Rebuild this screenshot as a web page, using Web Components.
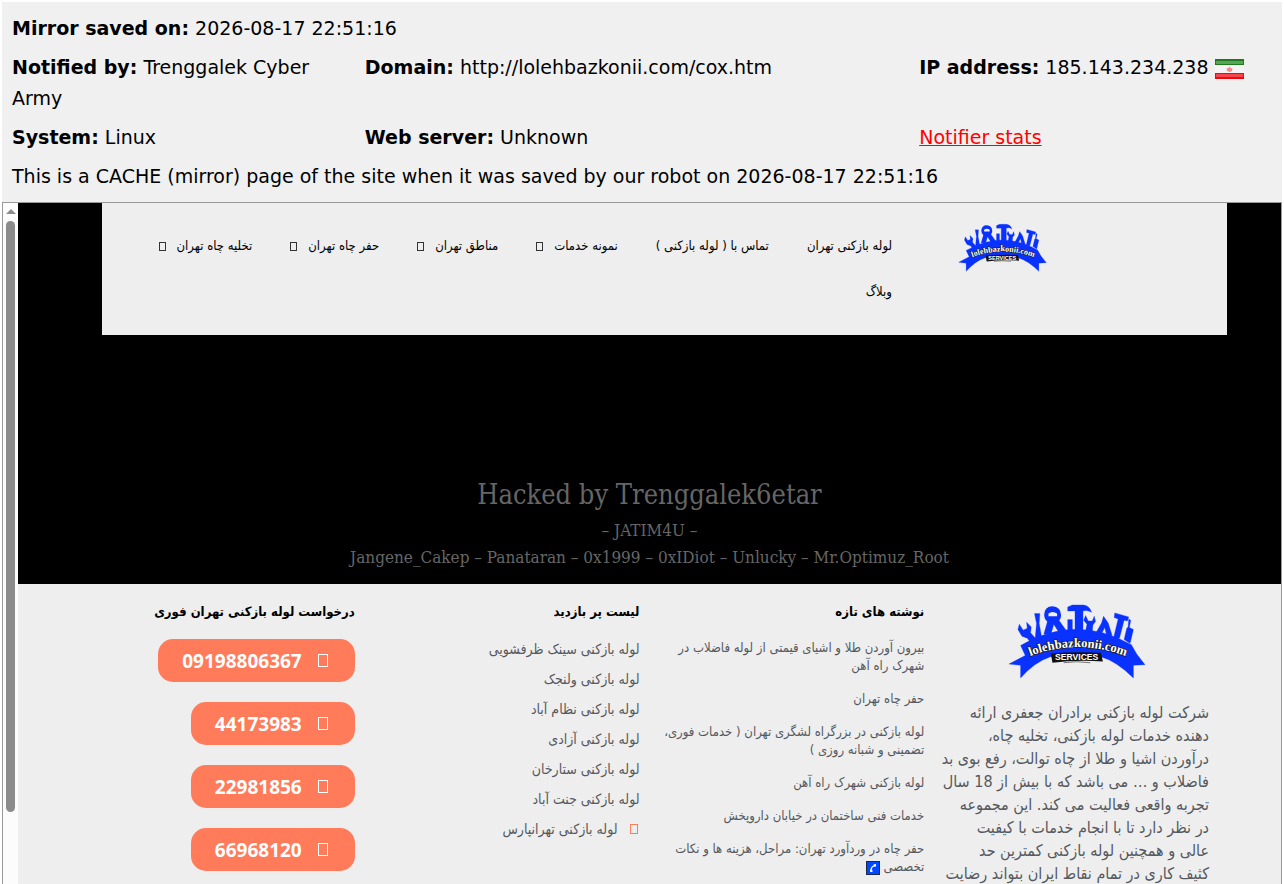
<!DOCTYPE html>
<html lang="en">
<head>
<meta charset="utf-8">
<title>Mirror saved on 2026-08-17</title>
<style>
    body{
        margin:0;
        padding:2px 2px 0;
        height:100vh;
        box-sizing:border-box;
        display:flex;
        flex-direction:column;
        background:#fff;
        overflow:hidden;
        font-family:"DejaVu Sans", Verdana, sans-serif;
    }
</style>
</head>
<body>

<mirror-info>
    <info-cell wide label="Mirror saved on:">2026-08-17 22:51:16</info-cell>
    <info-cell label="Notified by:">Trenggalek Cyber Army</info-cell>
    <info-cell label="Domain:">http://lolehbazkonii.com/cox.htm</info-cell>
    <info-cell label="IP address:">185.143.234.238 <flag-iran></flag-iran></info-cell>
    <info-cell label="System:">Linux</info-cell>
    <info-cell label="Web server:">Unknown</info-cell>
    <info-cell><a href="#stats">Notifier stats</a></info-cell>
    <info-cell wide>This is a CACHE (mirror) page of the site when it was saved by our robot on 2026-08-17 22:51:16</info-cell>
</mirror-info>

<mirror-frame>
    <site-header>
        <nav-item>لوله بازکنی تهران</nav-item>
        <nav-item>تماس با ( لوله بازکنی )</nav-item>
        <nav-item menu>نمونه خدمات</nav-item>
        <nav-item menu>مناطق تهران</nav-item>
        <nav-item menu>حفر چاه تهران</nav-item>
        <nav-item menu>تخلیه چاه تهران</nav-item>
        <nav-item>وبلاگ</nav-item>
    </site-header>

    <hacked-banner title="Hacked by Trenggalek6etar">
        <p>– JATIM4U –</p>
        <p>Jangene_Cakep – Panataran – 0x1999 – 0xIDiot – Unlucky – Mr.Optimuz_Root</p>
    </hacked-banner>

    <site-footer>
        <footer-about>شرکت لوله بازکنی برادران جعفری ارائه<br>دهنده خدمات لوله بازکنی، تخلیه چاه،<br>درآوردن اشیا و طلا از چاه توالت، رفع بوی بد<br>فاضلاب و … می باشد که با بیش از 18 سال<br>تجربه واقعی فعالیت می کند. این مجموعه<br>در نظر دارد تا با انجام خدمات با کیفیت<br>عالی و همچنین لوله بازکنی کمترین حد<br>کثیف کاری در تمام نقاط ایران بتواند رضایت</footer-about>

        <footer-column heading="نوشته های تازه">
            <footer-link small>بیرون آوردن طلا و اشیای قیمتی از لوله فاضلاب در<br>شهرک راه آهن</footer-link>
            <footer-link small>حفر چاه تهران</footer-link>
            <footer-link small>لوله بازکنی در بزرگراه لشگری تهران ( خدمات فوری،<br>تضمینی و شبانه روزی )</footer-link>
            <footer-link small>لوله بازکنی شهرک راه آهن</footer-link>
            <footer-link small>خدمات فنی ساختمان در خیابان داروپخش</footer-link>
            <footer-link small>حفر چاه در وردآورد تهران: مراحل، هزینه ها و نکات<br>تخصصی <phone-mark></phone-mark></footer-link>
        </footer-column>

        <footer-column heading="لیست پر بازدید">
            <footer-link>لوله بازکنی سینک ظرفشویی</footer-link>
            <footer-link>لوله بازکنی ولنجک</footer-link>
            <footer-link>لوله بازکنی نظام آباد</footer-link>
            <footer-link>لوله بازکنی آزادی</footer-link>
            <footer-link>لوله بازکنی ستارخان</footer-link>
            <footer-link>لوله بازکنی جنت آباد</footer-link>
            <footer-link icon>لوله بازکنی تهرانپارس</footer-link>
        </footer-column>

        <footer-column heading="درخواست لوله بازکنی تهران فوری">
            <phone-button number="09198806367"></phone-button>
            <phone-button number="44173983"></phone-button>
            <phone-button number="22981856"></phone-button>
            <phone-button number="66968120"></phone-button>
        </footer-column>
    </site-footer>
</mirror-frame>

<script>
class BaseElement extends HTMLElement {
    constructor(){
        super();
        this.attachShadow({mode:'open'});
    }
    connectedCallback(){
        const template = document.createElement('template');
        template.innerHTML = `
        <style>
        *{
            padding:0;
            margin:0;
            box-sizing:border-box;
        }
        ${this.getStyles()}
        </style>
        ${this.getTemplate()}`;
        this.shadowRoot.replaceChildren(template.content.cloneNode(true));
    }
}

/* top panel */
class MirrorInfo extends BaseElement {
    getTemplate(){
        return `<slot></slot>`;
    }
    getStyles(){
        return `
        :host{
            display:grid;
            grid-template-columns:28% 44% 28%;
            row-gap:8px;
            padding:11px 10px 10px;
            background:#f0f0f0;
            font-size:19px;
            line-height:31px;
            color:#000;
        }
        `;
    }
}

class InfoCell extends BaseElement {
    getTemplate(){
        const label = this.getAttribute('label');
        return `${label ? `<b>${label}</b> ` : ''}<slot></slot>`;
    }
    getStyles(){
        return `
        :host{
            display:block;
            padding-right:10px;
        }
        :host([wide]){
            grid-column:1 / -1;
        }
        ::slotted(a){
            color:#f00;
        }
        `;
    }
}

class FlagIran extends BaseElement {
    getTemplate(){
        return `
        <svg width="29" height="20" viewBox="0 0 29 20">
            <rect width="29" height="20" fill="#f4f4f4"/>
            <rect width="29" height="6" fill="#1f7a1f"/>
            <rect x="1" y="2" width="27" height="3" fill="#58a458"/>
            <rect y="14" width="29" height="6" fill="#e80c12"/>
            <rect x="1" y="15" width="27" height="3" fill="#f8444a"/>
            <path d="M14.5 7.500l1 1.500 2 .5-.5 2.500-2.500 1-2.500-1-.5-2.500 2-.5z" fill="#f58a8a"/>
        </svg>`;
    }
    getStyles(){
        return `
        :host{
            display:inline-block;
            vertical-align:middle;
            line-height:0;
        }
        `;
    }
}

/* cached page with its scrollbar */
class MirrorFrame extends BaseElement {
    getTemplate(){
        return `
        <div class="scrollbar">
            <span class="arrow"></span>
            <span class="thumb"></span>
        </div>
        <div class="page" dir="rtl"><slot></slot></div>`;
    }
    getStyles(){
        return `
        :host{
            flex:1;
            min-height:0;
            display:flex;
            overflow:hidden;
            border:1px solid #999;
            border-bottom:0;
        }
        .scrollbar{
            flex:none;
            width:15px;
            background:#fcfcfc;
            display:flex;
            flex-direction:column;
            align-items:center;
            padding:6px 0 72px;
            gap:7px;
        }
        .arrow{
            border:5px solid transparent;
            border-top:0;
            border-bottom:5px solid #8b8b8b;
        }
        .thumb{
            flex:1;
            width:9px;
            border-radius:5px;
            background:#8b8b8b;
        }
        .page{
            flex:1;
            min-width:0;
            background:#000;
            font-family:"DejaVu Sans Condensed", "DejaVu Sans", sans-serif;
        }
        `;
    }
}

class SiteLogo extends BaseElement {
    getTemplate(){
        return `
        <svg viewBox="24 24 416 230" role="img" aria-label="lolehbazkonii.com services">
            <g fill="#0a32ff" stroke="#0a32ff" stroke-linejoin="round">
                <path d="M62 152Q230 55 396 150L412 178L437 210L402 212V250Q352 200 304 186H152Q104 202 62 250V212L27 208L76 182Z"/>
                <path d="M58 88L54 104L66 124L82 130L96 148L112 136L92 114L94 96L80 82L82 100L70 106Z"/>
                <path d="M104 56h16l-2 30 8 44h-20l4-44z"/>
                <path d="M144 76L132 118L154 116L162 88L178 114L200 108L176 74Z"/>
                <path d="M204 36L218 30H252Q270 32 276 52Q262 44 250 48V110H226V48H204Z"/>
                <path d="M204 74h14v36h-14z"/>
                <path d="M258 62L252 76L262 88L258 108L278 110L280 90L288 80L284 64L278 78L266 78Z"/>
                <path d="M312 64L306 84L288 116L304 120L316 98L322 126L338 122L326 84Z"/>
                <path d="M346 54L388 66L384 78L374 76L360 130H342L356 72L344 68Z"/>
                <path d="M388 72L394 76L390 98L402 104L392 146L374 134L382 100L386 96Z"/>
            </g>
            <path d="M133 60Q134 34 158 34Q183 36 184 60Q184 78 166 84H150Q134 78 133 60Z" fill="#0a32ff"/>
            <path d="M146 56Q158 46 172 56V64H146Z" fill="#eee"/>
            <path d="M153 176Q230 170 304 174L310 200Q230 194 158 204Z" fill="#111"/>
            <path id="arc" d="M80 188Q232 126 390 188" fill="none"/>
            <text class="name"><textPath href="#arc" startOffset="50%" text-anchor="middle">lolehbazkonii.com</textPath></text>
            <text class="services" x="231" y="195" text-anchor="middle">SERVICES</text>
            <path d="M192 204Q230 198 272 204" fill="none" stroke="#333" stroke-width="2"/>
        </svg>`;
    }
    getStyles(){
        return `
        :host{
            display:block;
            direction:ltr;
        }
        svg{
            display:block;
            width:100%;
        }
        .name{
            font:bold 38px "Liberation Serif", serif;
            fill:#fff;
            stroke:#222;
            stroke-width:5px;
            paint-order:stroke;
        }
        .services{
            font:bold 26px "Liberation Sans", sans-serif;
            fill:#fff;
        }
        `;
    }
}

class SiteHeader extends BaseElement {
    getTemplate(){
        return `
        <header>
            <site-logo></site-logo>
            <nav><slot></slot></nav>
        </header>`;
    }
    getStyles(){
        return `
        :host{
            display:block;
            padding:0 54px 0 84px;
        }
        header{
            display:flex;
            align-items:flex-start;
            background:#eee;
            padding:20px 180px 20px 20px;
        }
        site-logo{
            flex:none;
            width:89px;
        }
        nav{
            flex:1;
            display:flex;
            flex-wrap:wrap;
            column-gap:38px;
            margin-right:66px;
        }
        `;
    }
}

class NavItem extends BaseElement {
    getTemplate(){
        return `<a href="#"><slot></slot>${this.hasAttribute('menu') ? '<i></i>' : ''}</a>`;
    }
    getStyles(){
        return `
        :host{
            display:block;
            font-size:13px;
            line-height:46px;
        }
        a{
            display:flex;
            align-items:center;
            color:#000;
            text-decoration:none;
            white-space:nowrap;
        }
        i{
            width:7px;
            height:9px;
            margin-right:11px;
            border:1px solid #333;
        }
        `;
    }
}

class HackedBanner extends BaseElement {
    getTemplate(){
        return `
        <h1>${this.getAttribute('title')}</h1>
        <slot></slot>`;
    }
    getStyles(){
        return `
        :host{
            display:block;
            direction:ltr;
            padding:140px 20px 13px;
            text-align:center;
            color:#666;
            font-family:"DejaVu Serif Condensed", "DejaVu Serif", serif;
            font-size:17px;
            line-height:27px;
        }
        h1{
            margin-bottom:2px;
            font-size:27px;
            line-height:40px;
            font-weight:400;
        }
        ::slotted(p){
            margin:0;
        }
        `;
    }
}

class SiteFooter extends BaseElement {
    getTemplate(){
        return `<slot></slot>`;
    }
    getStyles(){
        return `
        :host{
            display:grid;
            grid-template-columns:repeat(4, minmax(0, 1fr));
            column-gap:20px;
            padding:16px 72px 20px;
            background:#eee;
            color:#54595f;
        }
        `;
    }
}

class FooterAbout extends BaseElement {
    getTemplate(){
        return `
        <site-logo></site-logo>
        <p><slot></slot></p>`;
    }
    getStyles(){
        return `
        :host{
            display:block;
            font-size:16px;
            line-height:23px;
        }
        site-logo{
            width:138px;
            margin:3px auto 22px;
        }
        p{
            white-space:nowrap;
        }
        `;
    }
}

class FooterColumn extends BaseElement {
    getTemplate(){
        return `
        <h2>${this.getAttribute('heading')}</h2>
        <slot></slot>`;
    }
    getStyles(){
        return `
        :host{
            display:block;
        }
        h2{
            margin-bottom:15px;
            font-size:13px;
            line-height:24px;
            font-weight:bold;
            color:#000;
            white-space:nowrap;
        }
        `;
    }
}

class FooterLink extends BaseElement {
    getTemplate(){
        return `<a href="#">${this.hasAttribute('icon') ? '<i></i>' : ''}<slot></slot></a>`;
    }
    getStyles(){
        return `
        :host{
            display:block;
            font-size:14px;
            line-height:20px;
            margin-bottom:10px;
        }
        :host([small]){
            font-size:13px;
            line-height:18px;
            margin-bottom:15px;
        }
        a{
            color:inherit;
            text-decoration:none;
            white-space:nowrap;
        }
        i{
            display:inline-block;
            width:8px;
            height:10px;
            margin:0 2px 0 12px;
            border:1px solid #ff7b5a;
        }
        `;
    }
}

class PhoneMark extends BaseElement {
    getTemplate(){
        return `
        <svg width="14" height="14" viewBox="0 0 14 14">
            <rect x=".5" y=".5" width="13" height="13" fill="#0048ff" stroke="#1b2a4a"/>
            <path d="M5 10.500Q4.500 6 8.500 4.500" fill="none" stroke="#fff" stroke-width="1.300"/>
            <path d="M7.500 3.500l2.500-.5v2.500l-2 .3zM4 8.500l2.300.2.200 2.300H4.300z" fill="#fff"/>
        </svg>`;
    }
    getStyles(){
        return `
        :host{
            display:inline-block;
            vertical-align:middle;
            line-height:0;
        }
        `;
    }
}

class PhoneButton extends BaseElement {
    getTemplate(){
        const number = this.getAttribute('number');
        return `<a href="tel:${number}"><i></i>${number}</a>`;
    }
    getStyles(){
        return `
        :host{
            display:flex;
            margin-bottom:20px;
        }
        a{
            display:flex;
            align-items:center;
            gap:16px;
            height:43px;
            padding:0 27px 0 24px;
            border-radius:15px;
            background:#ff7b5a;
            color:#fff;
            font:bold 19px "Open Sans", "Noto Sans", sans-serif;
            text-decoration:none;
        }
        i{
            width:10px;
            height:13px;
            border:1px solid #fff;
        }
        `;
    }
}

customElements.define('mirror-info', MirrorInfo);
customElements.define('info-cell', InfoCell);
customElements.define('flag-iran', FlagIran);
customElements.define('mirror-frame', MirrorFrame);
customElements.define('site-logo', SiteLogo);
customElements.define('site-header', SiteHeader);
customElements.define('nav-item', NavItem);
customElements.define('hacked-banner', HackedBanner);
customElements.define('site-footer', SiteFooter);
customElements.define('footer-about', FooterAbout);
customElements.define('footer-column', FooterColumn);
customElements.define('footer-link', FooterLink);
customElements.define('phone-mark', PhoneMark);
customElements.define('phone-button', PhoneButton);
</script>
</body>
</html>
